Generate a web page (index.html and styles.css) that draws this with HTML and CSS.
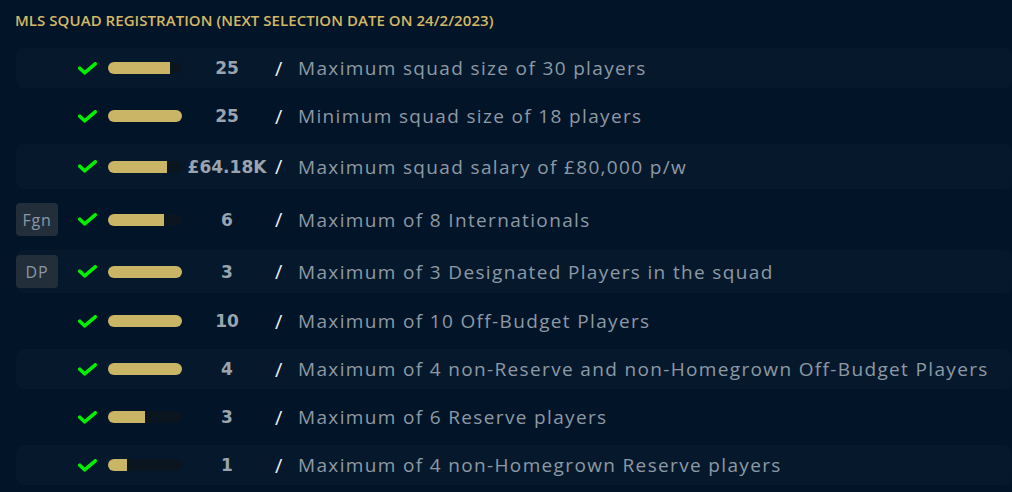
FILE: index.html
```html
<!DOCTYPE html>
<html lang="en">
<head>
  <meta charset="UTF-8">
  <title>MLS Squad Registration</title>
  <link rel="stylesheet" href="styles.css">
</head>
<body>
  <div class="panel">
    <h2 class="panel-title">MLS Squad Registration (Next Selection Date on 24/2/2023)</h2>

    <div class="rules">
      <div class="rule">
        <span class="tag empty"></span>
        <svg class="check" viewBox="0 0 19 13"><path d="M1.8 6.2 L6.6 10.8 L17.2 1.8"/></svg>
        <div class="bar"><div class="bar-fill" style="width:83.3%"></div></div>
        <span class="value">25</span>
        <span class="sep">/</span>
        <span class="label">Maximum squad size of 30 players</span>
      </div>

      <div class="rule">
        <span class="tag empty"></span>
        <svg class="check" viewBox="0 0 19 13"><path d="M1.8 6.2 L6.6 10.8 L17.2 1.8"/></svg>
        <div class="bar"><div class="bar-fill" style="width:100%"></div></div>
        <span class="value">25</span>
        <span class="sep">/</span>
        <span class="label">Minimum squad size of 18 players</span>
      </div>

      <div class="rule rule-lg">
        <span class="tag empty"></span>
        <svg class="check" viewBox="0 0 19 13"><path d="M1.8 6.2 L6.6 10.8 L17.2 1.8"/></svg>
        <div class="bar"><div class="bar-fill" style="width:80.2%"></div></div>
        <span class="value">£64.18K</span>
        <span class="sep">/</span>
        <span class="label">Maximum squad salary of £80,000 p/w</span>
      </div>

      <div class="rule rule-lg">
        <span class="tag">Fgn</span>
        <svg class="check" viewBox="0 0 19 13"><path d="M1.8 6.2 L6.6 10.8 L17.2 1.8"/></svg>
        <div class="bar"><div class="bar-fill" style="width:75%"></div></div>
        <span class="value">6</span>
        <span class="sep">/</span>
        <span class="label">Maximum of 8 Internationals</span>
      </div>

      <div class="rule">
        <span class="tag">DP</span>
        <svg class="check" viewBox="0 0 19 13"><path d="M1.8 6.2 L6.6 10.8 L17.2 1.8"/></svg>
        <div class="bar"><div class="bar-fill" style="width:100%"></div></div>
        <span class="value">3</span>
        <span class="sep">/</span>
        <span class="label">Maximum of 3 Designated Players in the squad</span>
      </div>

      <div class="rule">
        <span class="tag empty"></span>
        <svg class="check" viewBox="0 0 19 13"><path d="M1.8 6.2 L6.6 10.8 L17.2 1.8"/></svg>
        <div class="bar"><div class="bar-fill" style="width:100%"></div></div>
        <span class="value">10</span>
        <span class="sep">/</span>
        <span class="label">Maximum of 10 Off-Budget Players</span>
      </div>

      <div class="rule">
        <span class="tag empty"></span>
        <svg class="check" viewBox="0 0 19 13"><path d="M1.8 6.2 L6.6 10.8 L17.2 1.8"/></svg>
        <div class="bar"><div class="bar-fill" style="width:100%"></div></div>
        <span class="value">4</span>
        <span class="sep">/</span>
        <span class="label">Maximum of 4 non-Reserve and non-Homegrown Off-Budget Players</span>
      </div>

      <div class="rule">
        <span class="tag empty"></span>
        <svg class="check" viewBox="0 0 19 13"><path d="M1.8 6.2 L6.6 10.8 L17.2 1.8"/></svg>
        <div class="bar"><div class="bar-fill" style="width:50%"></div></div>
        <span class="value">3</span>
        <span class="sep">/</span>
        <span class="label">Maximum of 6 Reserve players</span>
      </div>

      <div class="rule">
        <span class="tag empty"></span>
        <svg class="check" viewBox="0 0 19 13"><path d="M1.8 6.2 L6.6 10.8 L17.2 1.8"/></svg>
        <div class="bar"><div class="bar-fill" style="width:25%"></div></div>
        <span class="value">1</span>
        <span class="sep">/</span>
        <span class="label">Maximum of 4 non-Homegrown Reserve players</span>
      </div>
    </div>
  </div>
</body>
</html>
```

FILE: styles.css
```css
body {
  margin: 0;
  font-family: 'Open Sans', sans-serif;
  background-color: #021427;
  overflow: hidden;
}
.panel {
  padding: 10px 0 0 16px;
}
.panel-title {
  margin: 0 0 18px -1px;
  font-size: 15px;
  line-height: 20px;
  font-weight: 600;
  text-transform: uppercase;
  letter-spacing: 0.05px;
  color: #d3b866;
}
.rules {
  display: flex;
  flex-direction: column;
  gap: 8px;
}
.rule {
  display: flex;
  align-items: center;
  min-height: 40px;
  border-radius: 8px;
  box-sizing: border-box;
  padding: 5px 0;
}
.rule:nth-child(odd) {
  background-color: #06192c;
}
.rule-lg {
  min-height: 45px;
}
.tag {
  width: 42px;
  height: 33px;
  flex: none;
  display: flex;
  align-items: center;
  justify-content: center;
  border-radius: 4px;
  background-color: #232e3b;
  color: #8a97a5;
  font-size: 16px;
  letter-spacing: 0.8px;
}
.tag.empty {
  height: 0;
  background: none;
}
.check {
  width: 19px;
  height: 13px;
  margin-left: 20px;
  flex: none;
}
.check path {
  fill: none;
  stroke: #00f000;
  stroke-width: 3.6;
  stroke-linecap: round;
  stroke-linejoin: round;
}
.bar {
  width: 74px;
  height: 12px;
  margin-left: 11px;
  border-radius: 6px;
  background-color: #0a1520;
  overflow: hidden;
  flex: none;
}
.bar-fill {
  height: 100%;
  background-color: #cab566;
}
.value {
  width: 90px;
  text-align: center;
  font-family: 'DejaVu Sans', sans-serif;
  font-size: 17px;
  font-weight: 700;
  color: #9aa4ae;
  flex: none;
}
.sep {
  margin-left: 3px;
  width: 23px;
  font-size: 20px;
  color: #e8eef4;
  flex: none;
}
.label {
  font-size: 19px;
  letter-spacing: 1.35px;
  color: #8d99a5;
  white-space: nowrap;
}
```
